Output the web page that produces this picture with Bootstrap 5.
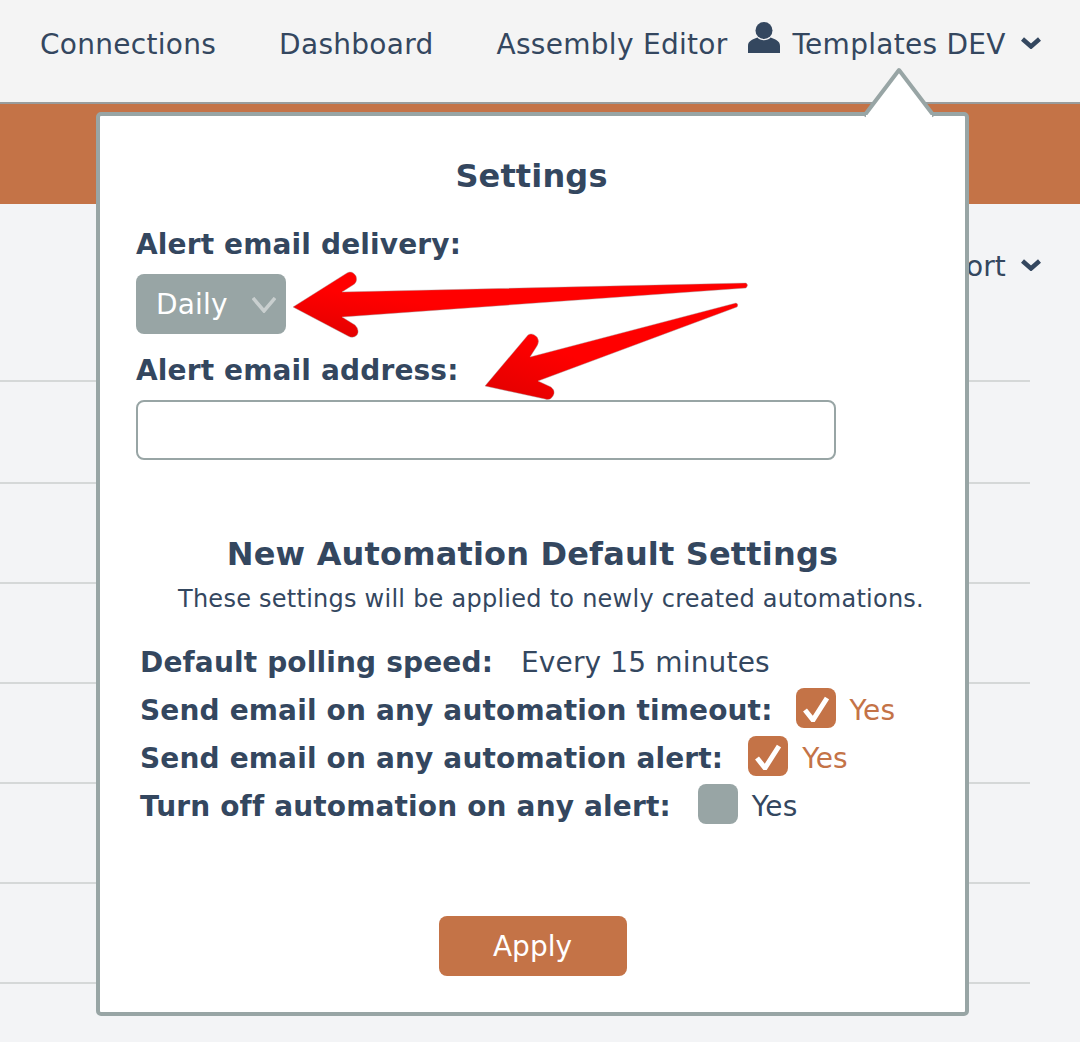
<!DOCTYPE html>
<html lang="en">
<head>
    <meta charset="UTF-8">
    <meta name="viewport" content="width=device-width, initial-scale=1.0">
    <title>Settings</title>
    <link href="https://cdn.jsdelivr.net/npm/bootstrap@5.3.0/dist/css/bootstrap.min.css" rel="stylesheet">
    <style>
        body {
            background-color: #f3f4f6;
            color: #34475f;
            font-family: "DejaVu Sans", Verdana, sans-serif;
            font-size: 28px;
            letter-spacing: .15px;
            overflow: hidden;
            height: 1042px;
        }
        .top-bar {
            height: 104px;
            background-color: #f4f4f4;
            border-bottom: 2px solid #999c9c;
            padding: 0 39px 12px 40px;
            letter-spacing: .28px;
        }
        .top-link {
            color: #34475f;
            text-decoration: none;
        }
        .nav-gap { margin-left: 63px; }
        .user-icon { margin: 0 12px 0 21px; position: relative; top: -8px; }
        .down-chevron { margin-left: 15px; margin-bottom: 5px; }
        .orange-band {
            height: 100px;
            background-color: #c47347;
        }
        .tools-row {
            height: 124px;
            padding: 42px 39px 0 0;
        }
        .data-rows { width: 1030px; }
        .data-row {
            height: 100px;
            border-bottom: 2px solid #d5d8d8;
        }
        .data-row:first-child { height: 54px; }
        .data-row:nth-child(2) { height: 102px; }
        .settings-pop {
            position: absolute;
            left: 96px;
            top: 112px;
            width: 873px;
            height: 904px;
            background: #fff;
            border: 4px solid #98a5a5;
            border-radius: 5px;
            padding: 27px 36px 0;
        }
        .pop-caret {
            position: absolute;
            left: 760px;
            top: -50px;
        }
        .pop-title {
            font-size: 32px;
            font-weight: 700;
            line-height: 66px;
            margin: 0 2px 17px 0;
            text-align: center;
        }
        .field-label {
            display: block;
            font-weight: 700;
            line-height: 38px;
            margin: 0;
        }
        .select-box {
            width: 150px;
            height: 60px;
            background: #98a5a5;
            border-radius: 8px;
            color: #fff;
            padding: 2px 10px 0 20px;
            margin: 10px 0 18px;
        }
        .mail-input {
            width: 700px;
            height: 60px;
            border: 2px solid #98a5a5;
            border-radius: 8px;
            margin-top: 10px;
        }
        .sub-title {
            font-size: 32px;
            font-weight: 700;
            text-align: center;
            line-height: 40px;
            margin: 74px 0 0;
            letter-spacing: .17px;
        }
        .sub-note {
            font-size: 24px;
            letter-spacing: .25px;
            line-height: 30px;
            margin: 10px 0 0 42px;
            white-space: nowrap;
        }
        .opt-list { margin: 25px 0 0 5px; }
        .opt-row { height: 48px; white-space: nowrap; }
        .opt-row b { font-weight: 700; margin-left: -1px; }
        .tick-box {
            width: 40px;
            height: 40px;
            border-radius: 8px;
            background: #c47347;
            margin: -6px 14px 0 24px;
            flex: none;
        }
        .opt-row:nth-child(2) .tick-box { margin-left: 23px; }
        .opt-row:nth-child(3) .tick-box { margin-left: 25px; }
        .opt-row:nth-child(4) .tick-box { margin-left: 27px; }
        .tick-box.is-off { background: #98a5a5; }
        .yes-on { color: #c47347; }
        .apply-btn {
            width: 188px;
            height: 60px;
            background: #c47347;
            border: 0;
            border-radius: 8px;
            color: #fff;
            font-size: 28px;
            padding: 2px 0 0;
        }
        .apply-row { margin-top: 85px; }
        .arrow-layer {
            position: absolute;
            left: 0;
            top: 0;
            pointer-events: none;
        }
    </style>
</head>
<body>
    <nav class="top-bar d-flex align-items-center">
        <a class="top-link" href="#">Connections</a>
        <a class="top-link nav-gap" href="#">Dashboard</a>
        <a class="top-link nav-gap" href="#">Assembly Editor</a>
        <svg class="user-icon" width="32" height="32" viewBox="0 0 32 32" fill="#34475f">
            <circle cx="16" cy="9.500" r="8.500"/>
            <path d="M0 32V25C0 20 4 18.500 9.500 16.500C12 20 20 20 22.500 16.500C28 18.500 32 20 32 25V32Z"/>
        </svg>
        <a class="top-link d-flex align-items-center" href="#">Templates DEV
            <svg class="down-chevron" width="20" height="13" viewBox="0 0 20 13" fill="none" stroke="#34475f" stroke-width="4.500"><path d="M1.500 3L10 10.500L18.500 3"/></svg>
        </a>
    </nav>
    <div class="orange-band"></div>
    <div class="tools-row d-flex justify-content-end align-items-start">
        <span class="d-flex align-items-center">Export
            <svg class="down-chevron" width="20" height="13" viewBox="0 0 20 13" fill="none" stroke="#34475f" stroke-width="4.500"><path d="M1.500 3L10 10.500L18.500 3"/></svg>
        </span>
    </div>
    <div class="data-rows">
        <div class="data-row"></div>
        <div class="data-row"></div>
        <div class="data-row"></div>
        <div class="data-row"></div>
        <div class="data-row"></div>
        <div class="data-row"></div>
        <div class="data-row"></div>
    </div>

    <div class="settings-pop">
        <svg class="pop-caret" width="78" height="54" viewBox="0 0 78 54">
            <path d="M4 50L39 4L74 50" fill="#fff" stroke="#98a5a5" stroke-width="4" stroke-linejoin="round"/>
            <rect x="6" y="49" width="66" height="5" fill="#fff"/>
        </svg>
        <h5 class="pop-title">Settings</h5>
        <label class="field-label">Alert email delivery:</label>
        <div class="select-box d-flex align-items-center justify-content-between">
            <span>Daily</span>
            <svg width="24" height="16" viewBox="0 0 24 16" fill="none" stroke="#c9cfcf" stroke-width="3.500"><path d="M1 1L12 14L23 1"/></svg>
        </div>
        <label class="field-label" for="alertMail">Alert email address:</label>
        <input type="text" id="alertMail" class="form-control mail-input">

        <h5 class="sub-title">New Automation Default Settings</h5>
        <p class="sub-note">These settings will be applied to newly created automations.</p>

        <div class="opt-list">
            <div class="opt-row d-flex align-items-center">
                <b>Default polling speed:</b><span class="ms-4 ps-1">Every 15 minutes</span>
            </div>
            <div class="opt-row d-flex align-items-center">
                <b>Send email on any automation timeout:</b>
                <span class="tick-box d-flex align-items-center justify-content-center">
                    <svg width="26" height="28" viewBox="0 0 26 28" fill="none" stroke="#fff" stroke-width="5"><path d="M2 16L10 26L24 4"/></svg>
                </span>
                <span class="yes-on">Yes</span>
            </div>
            <div class="opt-row d-flex align-items-center">
                <b>Send email on any automation alert:</b>
                <span class="tick-box d-flex align-items-center justify-content-center">
                    <svg width="26" height="28" viewBox="0 0 26 28" fill="none" stroke="#fff" stroke-width="5"><path d="M2 16L10 26L24 4"/></svg>
                </span>
                <span class="yes-on">Yes</span>
            </div>
            <div class="opt-row d-flex align-items-center">
                <b>Turn off automation on any alert:</b>
                <span class="tick-box is-off"></span>
                <span>Yes</span>
            </div>
        </div>

        <div class="apply-row text-center">
            <button type="button" class="btn apply-btn">Apply</button>
        </div>
    </div>

    <svg class="arrow-layer" width="1080" height="1042" viewBox="0 0 1080 1042">
        <defs>
            <linearGradient id="arrowRed" x1="0" y1="1" x2="1" y2="0">
                <stop offset="0" stop-color="#e00000"/>
                <stop offset="0.4" stop-color="#ff0000"/>
            </linearGradient>
        </defs>
        <path d="M293 307L347 273Q352 270 356 276Q358 282 353 285L342 292L746 283Q749 285 746 288L342 317L355 325Q360 330 357 335Q353 339 348 336Z" fill="url(#arrowRed)" stroke="#a0a0a0" stroke-width="0.4"/>
        <path d="M485 386L528 335Q532 332 537 337Q540 341 537 346L530 357L736 303Q739 304 737 307L538 381L551 387Q556 391 553 396Q550 401 545 399Z" fill="url(#arrowRed)" stroke="#a0a0a0" stroke-width="0.4"/>
    </svg>

    <script src="https://cdn.jsdelivr.net/npm/bootstrap@5.3.0/dist/js/bootstrap.bundle.min.js"></script>
</body>
</html>
